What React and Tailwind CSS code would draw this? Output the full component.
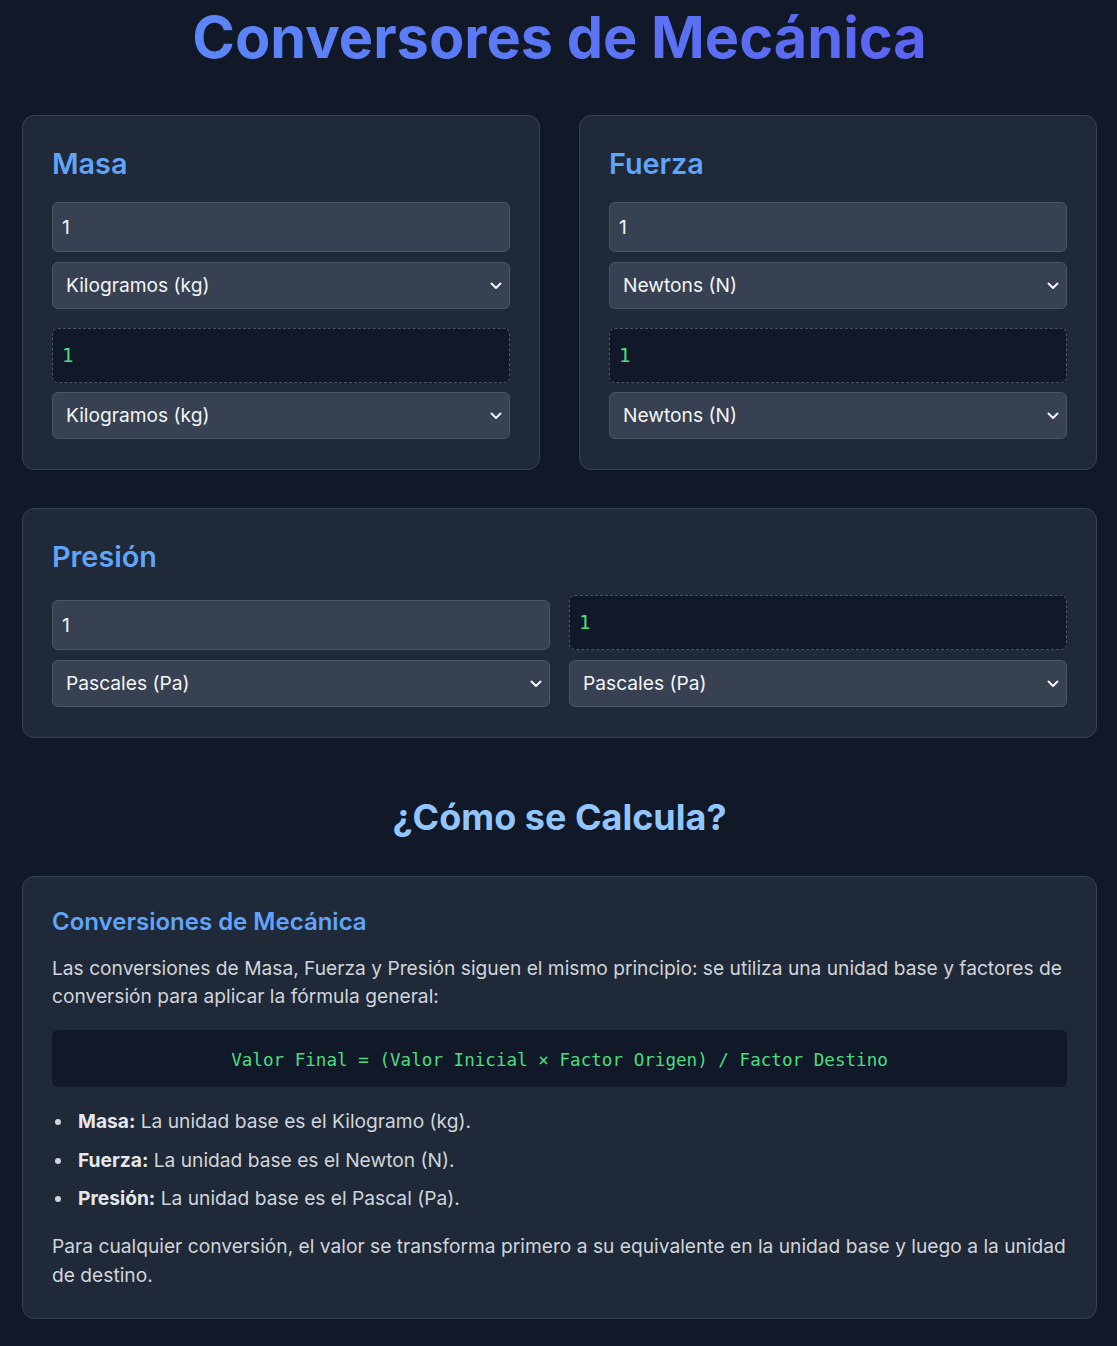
import { useState } from 'react';

const massUnits = [
  ["kg", "Kilogramos (kg)", 1],
  ["g", "Gramos (g)", 0.001],
  ["lb", "Libras (lb)", 0.453592],
];
const forceUnits = [
  ["N", "Newtons (N)", 1],
  ["kN", "Kilonewtons (kN)", 1000],
  ["dyn", "Dinas (dyn)", 0.00001],
];
const pressureUnits = [
  ["Pa", "Pascales (Pa)", 1],
  ["kPa", "Kilopascales (kPa)", 1000],
  ["atm", "Atmósferas (atm)", 101325],
];

const Chevron = () => (
  <svg className="pointer-events-none absolute right-[8px] top-1/2 -translate-y-1/2" width="12" height="8" viewBox="0 0 12 8" fill="none">
    <path d="M1.5 1.5 L6 6 L10.5 1.5" stroke="#f3f4f6" strokeWidth="2" strokeLinecap="round" strokeLinejoin="round" />
  </svg>
);

const UnitSelect = ({ units, value, onChange }) => (
  <div className="relative">
    <select
      value={value}
      onChange={(e) => onChange(e.target.value)}
      className="w-full h-[47px] appearance-none rounded-md border border-[#4b5563] bg-[#374151] pl-[13px] pr-8 text-[19.2px] text-[#f3f4f6] outline-none"
    >
      {units.map(([k, label]) => (
        <option key={k} value={k}>{label}</option>
      ))}
    </select>
    <Chevron />
  </div>
);

const ValueInput = ({ value, onChange }) => (
  <input
    type="text"
    value={value}
    onChange={(e) => onChange(e.target.value)}
    className="w-full h-[50px] rounded-md border border-[#4b5563] bg-[#374151] px-[9px] text-[19.2px] text-[#f3f4f6] outline-none"
  />
);

const Result = ({ value }) => (
  <div className="h-[55px] flex items-center rounded-md border border-dashed border-[#4b5563] bg-[#111827] px-[9px] pt-[2px] text-[19.2px] text-[#4ade80] font-['DejaVu_Sans_Mono',monospace]">
    {value}
  </div>
);

const convert = (v, units, from, to) => {
  const n = parseFloat(v);
  if (isNaN(n)) return "";
  const f = units.find((u) => u[0] === from)[2];
  const t = units.find((u) => u[0] === to)[2];
  return String(+((n * f) / t).toPrecision(10));
};

const Converter = ({ title, units }) => {
  const [value, setValue] = useState("1");
  const [from, setFrom] = useState(units[0][0]);
  const [to, setTo] = useState(units[0][0]);
  return (
    <div className="rounded-xl border border-[#374151] bg-[#1f2937] px-[29px] pt-[29px] pb-[30px]">
      <h2 className="text-[28.8px] leading-[38px] font-semibold text-[#60a5fa] mb-[19px]">{title}</h2>
      <div className="flex flex-col gap-[10px]">
        <ValueInput value={value} onChange={setValue} />
        <UnitSelect units={units} value={from} onChange={setFrom} />
      </div>
      <div className="flex flex-col gap-[9px] mt-[19px]">
        <Result value={convert(value, units, from, to)} />
        <UnitSelect units={units} value={to} onChange={setTo} />
      </div>
    </div>
  );
};

const PressureConverter = () => {
  const [value, setValue] = useState("1");
  const [from, setFrom] = useState("Pa");
  const [to, setTo] = useState("Pa");
  return (
    <div className="rounded-xl border border-[#374151] bg-[#1f2937] px-[29px] pt-[29px] pb-[30px]">
      <h2 className="text-[28.8px] leading-[38px] font-semibold text-[#60a5fa] mb-[19px]">Presión</h2>
      <div className="grid grid-cols-2 gap-x-[19px] items-end">
        <div className="flex flex-col gap-[10px]">
          <ValueInput value={value} onChange={setValue} />
          <UnitSelect units={pressureUnits} value={from} onChange={setFrom} />
        </div>
        <div className="flex flex-col gap-[10px]">
          <Result value={convert(value, pressureUnits, from, to)} />
          <UnitSelect units={pressureUnits} value={to} onChange={setTo} />
        </div>
      </div>
    </div>
  );
};

const Bullet = ({ label, children }) => (
  <li className="flex items-start">
    <span className="mt-[12px] ml-[3px] mr-[17px] h-[6px] w-[6px] shrink-0 rounded-full bg-[#d1d5db]" />
    <span>
      <strong className="text-[#e5e7eb]">{label}</strong> {children}
    </span>
  </li>
);

export default function App() {
  return (
    <div className="min-h-screen bg-[#111827] font-['Inter',sans-serif] text-[#d1d5db] pl-[22px] pr-[20px] pb-[28px]">
      <h1 className="text-center text-[57.7px] leading-[74px] font-bold bg-gradient-to-r from-[#5b8ef9] to-[#5b5bf0] bg-clip-text text-transparent">
        Conversores de Mecánica
      </h1>

      <div className="grid grid-cols-2 gap-[39px] mt-[41px]">
        <Converter title="Masa" units={massUnits} />
        <Converter title="Fuerza" units={forceUnits} />
      </div>

      <div className="mt-[38px]">
        <PressureConverter />
      </div>

      <h2 className="text-center text-[36px] leading-[44px] font-bold text-[#93c5fd] mt-[57px]">¿Cómo se Calcula?</h2>

      <div className="mt-[37px] rounded-xl border border-[#374151] bg-[#1f2937] px-[29px] pt-[29px] pb-[28px]">
        <h3 className="text-[24px] leading-[32px] font-semibold text-[#60a5fa]">Conversiones de Mecánica</h3>
        <p className="mt-[16px] text-[19.2px] leading-[28px]">
          Las conversiones de Masa, Fuerza y Presión siguen el mismo principio: se utiliza una unidad base y factores de conversión para aplicar la fórmula general:
        </p>
        <div className="mt-[20px] rounded-md bg-[#111827] h-[57px] pt-[3px] flex items-center justify-center font-['DejaVu_Sans_Mono',monospace] text-[17.6px] text-[#4ade80]">
          Valor Final = (Valor Inicial × Factor Origen) / Factor Destino
        </div>
        <ul className="mt-[20px] text-[19.2px] leading-[28px] flex flex-col gap-[10.5px]">
          <Bullet label="Masa:">La unidad base es el Kilogramo (kg).</Bullet>
          <Bullet label="Fuerza:">La unidad base es el Newton (N).</Bullet>
          <Bullet label="Presión:">La unidad base es el Pascal (Pa).</Bullet>
        </ul>
        <p className="mt-[20px] text-[19.2px] leading-[29px]">
          Para cualquier conversión, el valor se transforma primero a su equivalente en la unidad base y luego a la unidad de destino.
        </p>
      </div>
    </div>
  );
}
